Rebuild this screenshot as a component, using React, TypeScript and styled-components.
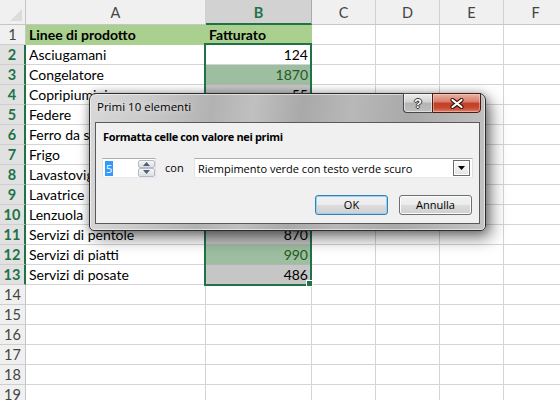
import React from 'react';
import styled, { createGlobalStyle } from 'styled-components';

const GREEN = '#217346';
const GRID = '#d4d4d4';

const GlobalStyle = createGlobalStyle`
  html, body { margin: 0; padding: 0; background: #fff; }
  body { overflow: hidden; }
  #root { width: 560px; height: 400px; overflow: hidden; }
  * { box-sizing: border-box; }
`;

const Screen = styled.div`
  position: relative;
  width: 560px;
  height: 400px;
  overflow: hidden;
  background: #fff;
  font-family: Lato, "Liberation Sans", sans-serif;
`;

const Sheet = styled.div`
  display: grid;
  grid-template-columns: 26px 180px 106px 64px 64px 64px 64px;
  grid-template-rows: 25px repeat(19, 20px);
  width: 568px;
`;

const Corner = styled.div`
  position: relative;
  background: #f0f0f0;
  border-right: 1px solid #c6c6c6;
  border-bottom: 1px solid #c6c6c6;
  &::after {
    content: '';
    position: absolute;
    right: 3px;
    bottom: 3px;
    border-style: solid;
    border-width: 0 0 12px 12px;
    border-color: transparent transparent #dcdcdc transparent;
  }
`;

const ColHeader = styled.div<{ $sel?: boolean }>`
  display: flex;
  align-items: center;
  justify-content: center;
  background: ${(p) => (p.$sel ? '#d2d2d2' : '#f0f0f0')};
  border-right: 1px solid ${(p) => (p.$sel ? '#ababab' : '#d0d0d0')};
  border-bottom: ${(p) => (p.$sel ? `2px solid ${GREEN}` : '1px solid #c6c6c6')};
  color: ${(p) => (p.$sel ? GREEN : '#444')};
  font-weight: ${(p) => (p.$sel ? 700 : 400)};
  font-size: 14.5px;
  padding-top: ${(p) => (p.$sel ? '1px' : '0')};
`;

const RowHeader = styled.div<{ $sel?: boolean }>`
  display: flex;
  align-items: center;
  justify-content: center;
  background: ${(p) => (p.$sel ? '#e1e1e1' : '#f0f0f0')};
  border-bottom: 1px solid #cfcfcf;
  border-right: ${(p) => (p.$sel ? `2px solid ${GREEN}` : '1px solid #c6c6c6')};
  color: ${(p) => (p.$sel ? GREEN : '#444')};
  font-weight: ${(p) => (p.$sel ? 700 : 400)};
  font-size: 14.5px;
`;

const Cell = styled.div<{ $fill?: string; $grid?: string; $right?: boolean; $bold?: boolean; $color?: string }>`
  border-right: 1px solid ${(p) => p.$grid ?? GRID};
  border-bottom: 1px solid ${(p) => p.$grid ?? GRID};
  background: ${(p) => p.$fill ?? '#fff'};
  color: ${(p) => p.$color ?? '#000'};
  font-weight: ${(p) => (p.$bold ? 700 : 400)};
  text-align: ${(p) => (p.$right ? 'right' : 'left')};
  font-size: 14px;
  line-height: 19px;
  padding: 0 3px;
  white-space: nowrap;
  overflow: hidden;
`;

const SelectionFrame = styled.div`
  position: absolute;
  left: 204px;
  top: 43px;
  width: 108px;
  height: 243px;
  border: 2px solid ${GREEN};
  pointer-events: none;
`;

const FillHandle = styled.div`
  position: absolute;
  right: -3px;
  bottom: -3px;
  width: 7px;
  height: 7px;
  background: ${GREEN};
  border: 1px solid #fff;
`;

/* ---------- dialog ---------- */

const Dialog = styled.div`
  position: absolute;
  left: 89px;
  top: 93px;
  width: 397px;
  height: 138px;
  display: flex;
  flex-direction: column;
  padding: 0 5px 6px 5px;
  border: 1px solid #2c2c2c;
  border-radius: 7px 7px 5px 5px;
  background: linear-gradient(
    97deg,
    #d8d8d8 0%,
    #cbcbcb 14%,
    #b2b2b2 30%,
    #c0c0c0 40%,
    #a9a9a9 52%,
    #b8b8b8 64%,
    #a9a9a9 78%,
    #c4c4c4 100%
  );
  box-shadow: inset 0 0 0 1px rgba(255, 255, 255, 0.55), 5px 7px 16px rgba(0, 0, 0, 0.5),
    0 0 9px rgba(0, 0, 0, 0.3);
  font-family: "Segoe UI", "Open Sans", "Noto Sans", sans-serif;
  font-size: 11px;
  color: #000;
`;

const TitleBar = styled.div`
  height: 28px;
  display: flex;
  justify-content: space-between;
  align-items: flex-start;
`;

const TitleText = styled.div`
  padding-left: 2px;
  line-height: 25px;
  font-size: 11.5px;
  text-shadow: 0 0 6px rgba(255, 255, 255, 0.8);
`;

const CaptionGroup = styled.div`
  display: flex;
  margin-top: -1px;
  margin-right: -1px;
  height: 20px;
`;

const HelpButton = styled.div`
  width: 29px;
  height: 20px;
  border: 1px solid #474747;
  border-right: none;
  border-radius: 0 0 0 4px;
  background: linear-gradient(#ececec 0%, #d2d2d2 45%, #b4b4b4 50%, #bfbfbf 100%);
  box-shadow: inset 0 0 0 1px rgba(255, 255, 255, 0.5);
  display: flex;
  align-items: center;
  justify-content: center;
  font-family: "Liberation Sans", sans-serif;
  font-weight: 700;
  font-size: 13px;
  color: #fff;
  text-shadow: 1px 0 0 #333, -1px 0 0 #333, 0 1px 0 #333, 0 -1px 0 #333;
`;

const CloseButton = styled.div`
  width: 49px;
  height: 20px;
  border: 1px solid #4a1c14;
  border-radius: 0 0 4px 0;
  background: linear-gradient(#eab2a5 0%, #d97a66 45%, #c23f22 50%, #c84a31 78%, #dc8270 100%);
  box-shadow: inset 0 0 0 1px rgba(255, 220, 210, 0.45);
  display: flex;
  align-items: center;
  justify-content: center;
`;

const Client = styled.div`
  flex: 1;
  border: 1px solid #5a5a5a;
  background: #f0f0f0;
  padding: 7px 6px 8px 6px;
  display: flex;
  flex-direction: column;
`;

const Heading = styled.div`
  font-weight: 700;
  line-height: 14px;
  padding-left: 1px;
  letter-spacing: -0.35px;
`;

const ControlRow = styled.div`
  margin-top: 14px;
  height: 20px;
  display: grid;
  grid-template-columns: 54px 38px 1fr;
  align-items: center;
`;

const SpinBox = styled.div`
  height: 20px;
  border: 1px solid #abadb3;
  border-left-color: #e2e3ea;
  border-right-color: #dbdfe6;
  border-bottom-color: #e3e9ef;
  background: #fff;
  display: flex;
  align-items: center;
  justify-content: space-between;
  padding: 0 0 0 2px;
`;

const SelectedText = styled.span`
  background: #3399ff;
  color: #fff;
  line-height: 15px;
  padding: 0 1px;
`;

const SpinButtons = styled.div`
  display: flex;
  flex-direction: column;
  width: 17px;
  height: 17px;
`;

const SpinBtn = styled.div`
  flex: 1;
  border: 1px solid #b5bcc7;
  border-radius: 2px;
  background: linear-gradient(#f6f6f6, #dedede);
  display: flex;
  align-items: center;
  justify-content: center;
`;

const ConLabel = styled.div`
  padding-left: 9px;
  line-height: 20px;
`;

const Combo = styled.div`
  height: 20px;
  border: 1px solid #abadb3;
  border-left-color: #e2e3ea;
  border-right-color: #dbdfe6;
  border-bottom-color: #e3e9ef;
  background: #fff;
  display: flex;
  align-items: center;
  justify-content: space-between;
  padding: 0 2px 0 3px;
`;

const ComboArrow = styled.div`
  width: 17px;
  height: 16px;
  border: 1px solid #6a6a6a;
  background: linear-gradient(#fafafa, #e4e4e4);
  box-shadow: inset 0 0 0 1px #fff;
  display: flex;
  align-items: center;
  justify-content: center;
`;

const ButtonRow = styled.div`
  margin-top: 17px;
  display: flex;
  justify-content: flex-end;
  gap: 11px;
  padding-right: 1px;
`;

const PushButton = styled.div<{ $default?: boolean }>`
  width: 73px;
  height: 20px;
  border: 1px solid ${(p) => (p.$default ? '#3c7fb1' : '#707070')};
  border-radius: 3px;
  background: linear-gradient(#f2f2f2 0%, #ebebeb 50%, #dddddd 50%, #cfcfcf 100%);
  box-shadow: inset 0 0 0 1px ${(p) => (p.$default ? '#8fd3f5' : '#fcfcfc')};
  display: flex;
  align-items: center;
  justify-content: center;
  line-height: 18px;
`;

type Row = [string, number | string];

const rows: Row[] = [
  ['Linee di prodotto', 'Fatturato'],
  ['Asciugamani', 124],
  ['Congelatore', 1870],
  ['Copripiumini', 55],
  ['Federe', 390],
  ['Ferro da stiro', 1100],
  ['Frigo', 2100],
  ['Lavastoviglie', 1500],
  ['Lavatrice', 350],
  ['Lenzuola', 640],
  ['Servizi di pentole', 870],
  ['Servizi di piatti', 990],
  ['Servizi di posate', 486],
];

const top5 = new Set([2100, 1870, 1500, 1100, 990]);
const HEADER_FILL = '#a9d08e';

const cols = ['A', 'B', 'C', 'D', 'E', 'F'];

function CloseGlyph() {
  return (
    <svg width="14" height="11" viewBox="0 0 14 11">
      <path d="M2.5 2 L11.5 9 M11.5 2 L2.5 9" stroke="#3b1510" strokeWidth="4.2" strokeLinecap="round" />
      <path d="M2.5 2 L11.5 9 M11.5 2 L2.5 9" stroke="#fff" strokeWidth="2.2" strokeLinecap="round" />
    </svg>
  );
}

function Tri({ up }: { up?: boolean }) {
  return (
    <svg width="7" height="4" viewBox="0 0 7 4">
      <path d={up ? 'M0 4 L3.5 0 L7 4 Z' : 'M0 0 L7 0 L3.5 4 Z'} fill="#4c607a" />
    </svg>
  );
}

export default function App() {
  const sheetRows: React.ReactNode[] = [];
  for (let r = 1; r <= 19; r++) {
    const data = rows[r - 1];
    const sel = r >= 2 && r <= 13;
    sheetRows.push(
      <RowHeader key={`h${r}`} $sel={sel}>
        {r}
      </RowHeader>
    );
    if (r === 1 && data) {
      sheetRows.push(
        <Cell key={`a${r}`} $fill={HEADER_FILL} $grid={HEADER_FILL} $bold>
          {data[0]}
        </Cell>,
        <Cell key={`b${r}`} $fill={HEADER_FILL} $grid={HEADER_FILL} $bold>
          {data[1]}
        </Cell>
      );
    } else if (data) {
      const v = data[1] as number;
      const active = r === 2;
      const good = top5.has(v);
      sheetRows.push(
        <Cell key={`a${r}`}>{data[0]}</Cell>,
        <Cell
          key={`b${r}`}
          $right
          $fill={active ? '#fff' : good ? '#9dbea0' : '#c6c6c6'}
          $grid={active ? GRID : '#b4b4b4'}
          $color={!active && good ? '#1d5c1d' : '#000'}
        >
          {v}
        </Cell>
      );
    } else {
      sheetRows.push(<Cell key={`a${r}`} />, <Cell key={`b${r}`} />);
    }
    for (let c = 0; c < 4; c++) sheetRows.push(<Cell key={`x${r}-${c}`} />);
  }

  return (
    <Screen>
      <GlobalStyle />
      <Sheet>
        <Corner />
        {cols.map((c) => (
          <ColHeader key={c} $sel={c === 'B'}>
            {c}
          </ColHeader>
        ))}
        {sheetRows}
      </Sheet>
      <SelectionFrame>
        <FillHandle />
      </SelectionFrame>

      <Dialog>
        <TitleBar>
          <TitleText>Primi 10 elementi</TitleText>
          <CaptionGroup>
            <HelpButton>?</HelpButton>
            <CloseButton>
              <CloseGlyph />
            </CloseButton>
          </CaptionGroup>
        </TitleBar>
        <Client>
          <Heading>Formatta celle con valore nei primi</Heading>
          <ControlRow>
            <SpinBox>
              <SelectedText>5</SelectedText>
              <SpinButtons>
                <SpinBtn>
                  <Tri up />
                </SpinBtn>
                <SpinBtn>
                  <Tri />
                </SpinBtn>
              </SpinButtons>
            </SpinBox>
            <ConLabel>con</ConLabel>
            <Combo>
              <span>Riempimento verde con testo verde scuro</span>
              <ComboArrow>
                <svg width="7" height="4" viewBox="0 0 7 4">
                  <path d="M0 0 L7 0 L3.5 4 Z" fill="#000" />
                </svg>
              </ComboArrow>
            </Combo>
          </ControlRow>
          <ButtonRow>
            <PushButton $default>OK</PushButton>
            <PushButton>Annulla</PushButton>
          </ButtonRow>
        </Client>
      </Dialog>
    </Screen>
  );
}
